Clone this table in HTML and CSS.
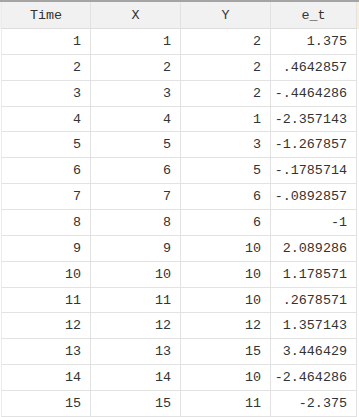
FILE: index.html
```html
<!DOCTYPE html>
<html>
<head>
<meta charset="utf-8">
<link rel="stylesheet" href="styles.css">
</head>
<body>
<div class="sheet">
  <div class="row head">
    <div class="cell">Time</div>
    <div class="cell">X</div>
    <div class="cell">Y</div>
    <div class="cell">e_t</div>
  </div>
  <div class="row"><div class="cell">1</div><div class="cell">1</div><div class="cell">2</div><div class="cell">1.375</div></div>
  <div class="row"><div class="cell">2</div><div class="cell">2</div><div class="cell">2</div><div class="cell">.4642857</div></div>
  <div class="row"><div class="cell">3</div><div class="cell">3</div><div class="cell">2</div><div class="cell">-.4464286</div></div>
  <div class="row"><div class="cell">4</div><div class="cell">4</div><div class="cell">1</div><div class="cell">-2.357143</div></div>
  <div class="row"><div class="cell">5</div><div class="cell">5</div><div class="cell">3</div><div class="cell">-1.267857</div></div>
  <div class="row"><div class="cell">6</div><div class="cell">6</div><div class="cell">5</div><div class="cell">-.1785714</div></div>
  <div class="row"><div class="cell">7</div><div class="cell">7</div><div class="cell">6</div><div class="cell">-.0892857</div></div>
  <div class="row"><div class="cell">8</div><div class="cell">8</div><div class="cell">6</div><div class="cell">-1</div></div>
  <div class="row"><div class="cell">9</div><div class="cell">9</div><div class="cell">10</div><div class="cell">2.089286</div></div>
  <div class="row"><div class="cell">10</div><div class="cell">10</div><div class="cell">10</div><div class="cell">1.178571</div></div>
  <div class="row"><div class="cell">11</div><div class="cell">11</div><div class="cell">10</div><div class="cell">.2678571</div></div>
  <div class="row"><div class="cell">12</div><div class="cell">12</div><div class="cell">12</div><div class="cell">1.357143</div></div>
  <div class="row"><div class="cell">13</div><div class="cell">13</div><div class="cell">15</div><div class="cell">3.446429</div></div>
  <div class="row"><div class="cell">14</div><div class="cell">14</div><div class="cell">10</div><div class="cell">-2.464286</div></div>
  <div class="row"><div class="cell">15</div><div class="cell">15</div><div class="cell">11</div><div class="cell">-2.375</div></div>
</div>
</body>
</html>
```
FILE: styles.css
```css
html, body {
  margin: 0;
  padding: 0;
  background: #ffffff;
  overflow: hidden;
}
.sheet {
  width: 359px;
  border-top: 2px solid #a4a4a4;
  font-family: "Courier New", "Nimbus Mono PS", "Nimbus Mono L", "FreeMono", "Liberation Mono", monospace;
  font-size: 13.4px;
  color: #333333;
}
.row {
  display: grid;
  grid-template-columns: 90px 90px 90px 86px;
  height: 25.87px;
  padding-left: 1px;
  box-sizing: border-box;
}
.row .cell {
  box-sizing: border-box;
  border-right: 1px solid #e2e2e2;
  border-bottom: 1px solid #e2e2e2;
  display: flex;
  align-items: center;
  justify-content: flex-end;
  padding-right: 9px;
  white-space: nowrap;
}
.row .cell:first-child {
  border-left: 1px solid #ececec;
}
.head {
  height: 27px;
  background: linear-gradient(to right, #f1f1f1 0, #f1f1f1 357px, #f7efd8 357px);
}
.head .cell {
  justify-content: center;
  padding-right: 0;
  padding-top: 1px;
  border-bottom-color: #dcdcdc;
}
```
